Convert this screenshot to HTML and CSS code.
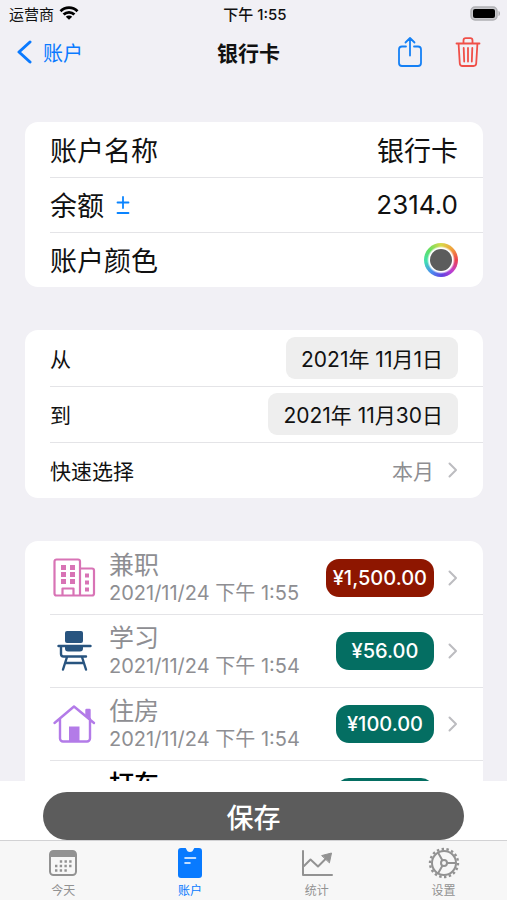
FILE: index.html
```html
<!DOCTYPE html>
<html lang="zh-CN">
<head>
<meta charset="utf-8">
<meta name="viewport" content="width=device-width, initial-scale=1">
<title>银行卡</title>
<link rel="stylesheet" href="styles.css">
</head>
<body>
<svg class="defs" aria-hidden="true">
  <symbol id="chevron" viewBox="0 0 10 16"><path d="M1.500 1.500 8 8l-6.500 6.500" fill="none" stroke="currentColor" stroke-width="2" stroke-linecap="round" stroke-linejoin="round"/></symbol>
</svg>

<div class="status">
  <div class="carrier">
    <span>运营商</span>
    <svg width="20" height="14" viewBox="0 0 20 14" aria-hidden="true">
      <g fill="none" stroke="#000" stroke-width="2.800"><path d="M1.500 5.200a12 12 0 0 1 17 0"/><path d="M4.600 8.600a7.600 7.600 0 0 1 10.800 0"/></g>
      <path d="M10 13.800 6.800 10.800a4.500 4.500 0 0 1 6.400 0z"/>
    </svg>
  </div>
  <time class="clock">下午 1:55</time>
  <svg class="battery" width="31" height="15" viewBox="0 0 31 15" aria-hidden="true">
    <rect x="1" y="1" width="26" height="13" rx="4" fill="#c8c8cc" stroke="#b0b0b4" stroke-width="1.500"/>
    <rect x="3" y="3" width="22" height="9" rx="2"/>
    <path d="M28.500 5c2 .6 2 4.400 0 5z" fill="#aaaaae"/>
  </svg>
</div>

<header class="nav">
  <a class="back" href="#accounts">
    <svg width="16" height="24" viewBox="0 0 16 24" aria-hidden="true"><path d="M14 2 3 12l11 10" fill="none" stroke="currentColor" stroke-width="3" stroke-linecap="round" stroke-linejoin="round"/></svg>
    <span>账户</span>
  </a>
  <h1>银行卡</h1>
  <div class="actions">
    <button class="share" type="button" aria-label="分享">
      <svg width="26" height="32" viewBox="0 0 26 32" fill="none" stroke="currentColor" stroke-width="1.800" stroke-linecap="round" stroke-linejoin="round"><path d="M9 10.500H5a3 3 0 0 0-3 3V27a3 3 0 0 0 3 3h16a3 3 0 0 0 3-3V13.500a3 3 0 0 0-3-3h-4M13 19.500V2M8.500 6.500 13 2l4.500 4.500"/></svg>
    </button>
    <button class="trash" type="button" aria-label="删除">
      <svg width="26" height="32" viewBox="0 0 26 32" fill="none" stroke="currentColor" stroke-width="1.800" stroke-linecap="round" stroke-linejoin="round"><path d="M1.500 7.500h23M8.500 7V4.500A2.300 2.300 0 0 1 10.800 2.200h4.400a2.300 2.300 0 0 1 2.300 2.300V7M3.600 8l1.200 19.500a2.700 2.700 0 0 0 2.700 2.500h11a2.700 2.700 0 0 0 2.700-2.500L22.400 8M8.700 12l.5 13.500M13 12v13.500M17.300 12l-.5 13.500"/></svg>
    </button>
  </div>
</header>

<main class="content">
  <section class="card account">
    <div class="row"><label for="name">账户名称</label><input id="name" type="text" value="银行卡"></div>
    <div class="row">
      <label for="balance">余额</label>
      <button class="sign" type="button" aria-label="切换正负">
        <svg width="14" height="20" viewBox="0 0 14 20" stroke="currentColor" stroke-width="1.800" stroke-linecap="round"><path d="M7 2v11M1.500 7.500h11M1.500 18h11"/></svg>
      </button>
      <input id="balance" type="text" inputmode="decimal" value="2314.0">
    </div>
    <div class="row"><label for="color">账户颜色</label><span class="ring"><input id="color" type="color" value="#5c5c5c"></span></div>
  </section>

  <section class="card period">
    <div class="row"><label for="from">从</label><button id="from" class="date" type="button">2021年 11月1日</button></div>
    <div class="row"><label for="to">到</label><button id="to" class="date" type="button">2021年 11月30日</button></div>
    <div class="row"><label for="quick">快速选择</label><button id="quick" class="quick" type="button">本月<svg class="chevron" aria-hidden="true"><use href="#chevron"/></svg></button></div>
  </section>

  <section class="card records">
    <a class="row" href="#r1">
      <svg class="icon" viewBox="0 0 44 44" fill="none" stroke="#d873b5" stroke-width="2.200" stroke-linejoin="round" aria-hidden="true">
        <path d="M28 39.500H4.500a2 2 0 0 1-2-2v-32a2 2 0 0 1 2-2H26a2 2 0 0 1 2 2zM28 12.500h12a2 2 0 0 1 2 2v23a2 2 0 0 1-2 2H28M10.500 39.500v-7h11v7"/>
        <path fill="#d873b5" stroke="none" d="M9 9h5v5H9zM18 9h5v5h-5zM9 16h5v5H9zM18 16h5v5h-5zM9 23h5v5H9zM18 23h5v5h-5zM33 17.500h4v4h-4zM33 24.500h4v4h-4zM33 31.500h4v4h-4z"/>
      </svg>
      <div class="text"><span class="title">兼职</span><time>2021/11/24 下午 1:55</time></div>
      <span class="amount income">¥1,500.00</span>
      <svg class="chevron" aria-hidden="true"><use href="#chevron"/></svg>
    </a>
    <a class="row" href="#r2">
      <svg class="icon" viewBox="0 0 44 44" fill="none" stroke="#28547f" stroke-width="2.400" stroke-linecap="round" stroke-linejoin="round" aria-hidden="true">
        <rect x="13" y="2" width="18" height="12" rx="2" fill="#28547f" stroke="none"/>
        <path d="M13 17.500h18v2a3 3 0 0 1-3 3H16a3 3 0 0 1-3-3z" fill="#28547f" stroke="none"/>
        <path d="M6.500 17h32M9 17v8a2.500 2.500 0 0 0 2.500 2.500H34M15 28l-4 12.500M30 28l4 12.500M13.500 34h18"/>
      </svg>
      <div class="text"><span class="title">学习</span><time>2021/11/24 下午 1:54</time></div>
      <span class="amount expense">¥56.00</span>
      <svg class="chevron" aria-hidden="true"><use href="#chevron"/></svg>
    </a>
    <a class="row" href="#r3">
      <svg class="icon" viewBox="0 0 44 44" fill="none" stroke="#b37be8" stroke-width="2.400" stroke-linecap="round" stroke-linejoin="round" aria-hidden="true">
        <path d="M2.500 21 22 4.500 42 21M8 17v19.500a3 3 0 0 0 3 3h24a3 3 0 0 0 3-3V17"/>
        <path d="M34.500 8h3v9l-3-3z" fill="#b37be8"/>
        <path d="M17 24.500h10.500v15H17z" fill="#b37be8" stroke="none"/>
      </svg>
      <div class="text"><span class="title">住房</span><time>2021/11/24 下午 1:54</time></div>
      <span class="amount expense">¥100.00</span>
      <svg class="chevron" aria-hidden="true"><use href="#chevron"/></svg>
    </a>
    <a class="row current" href="#r4">
      <span class="icon"></span>
      <div class="text"><span class="title">打车</span></div>
      <span class="amount expense"></span>
      <span class="chevron"></span>
    </a>
  </section>
</main>

<div class="save-bar"><button class="save" type="button">保存</button></div>

<nav class="tabs">
  <a href="#today">
    <svg width="32" height="32" viewBox="0 0 30 32" aria-hidden="true">
      <rect x="2" y="4" width="26" height="24" rx="3.500" fill="none" stroke="currentColor" stroke-width="2"/>
      <path fill="currentColor" d="M2 10V7a3 3 0 0 1 3-3h20a3 3 0 0 1 3 3v3z"/>
      <path stroke="currentColor" stroke-width="2.400" stroke-dasharray="2.400 2.300" d="M11.800 14.500h12M7 19h17M7 23.500h12"/>
    </svg>
    <span>今天</span>
  </a>
  <a class="active" href="#accounts">
    <svg width="30" height="32" viewBox="0 0 30 32" aria-hidden="true">
      <path fill="currentColor" d="M6 1h4.500c1 0 .8 4 4.500 4s3.500-4 4.500-4H24a3 3 0 0 1 3 3v24a3 3 0 0 1-3 3H6a3 3 0 0 1-3-3V4a3 3 0 0 1 3-3z"/>
      <path stroke="#fff" stroke-width="1.600" stroke-linecap="round" d="M10 11h10.500M10 16h5"/>
    </svg>
    <span>账户</span>
  </a>
  <a href="#stats">
    <svg width="32" height="32" viewBox="0 0 32 32" fill="none" stroke="currentColor" stroke-width="2" stroke-linecap="round" stroke-linejoin="round" aria-hidden="true">
      <path d="M2 4v24h29M3 19l6.500-6.500 7.500 7 9-9"/>
      <path fill="currentColor" stroke-width="1" d="M21 8.500 30.500 6l-2 9.500z"/>
    </svg>
    <span>统计</span>
  </a>
  <a href="#settings">
    <svg width="32" height="32" viewBox="0 0 32 32" fill="none" stroke="currentColor" stroke-width="2" aria-hidden="true">
      <circle cx="16" cy="16" r="12"/>
      <circle cx="16" cy="16" r="14" stroke-width="2.400" pathLength="72" stroke-dasharray="2 2"/>
      <circle cx="16" cy="16" r="3"/>
      <path d="M19 16h9M14.500 13.400 10 5.600M14.500 18.600 10 26.400"/>
    </svg>
    <span>设置</span>
  </a>
</nav>
</body>
</html>
```
FILE: styles.css
```css
* {
  box-sizing: border-box;
}

body {
  margin: 0;
  height: 100vh;
  display: flex;
  flex-direction: column;
  background: #f1f0f5;
  color: #111;
  font-family: Inter, "Noto Sans CJK SC", sans-serif;
  font-size: 20px;
}

button,
input {
  margin: 0;
  padding: 0;
  border: 0;
  background: none;
  color: inherit;
  font: inherit;
}

a {
  color: inherit;
  text-decoration: none;
}

svg {
  display: block;
}

.defs {
  position: absolute;
  width: 0;
  height: 0;
}

.status,
.nav {
  display: grid;
  grid-template-columns: 1fr auto 1fr;
  align-items: center;
  flex: none;
}

.status {
  height: 26px;
  padding: 0 6px 0 9px;
  font-size: 15px;
}

.carrier {
  display: flex;
  align-items: center;
  gap: 5px;
}

.clock {
  font-size: 15px;
  font-weight: 500;
}

.battery {
  justify-self: end;
}

.nav {
  height: 52px;
  padding: 0 26px 0 16px;
}

.back {
  display: flex;
  align-items: center;
  gap: 11px;
  color: #0a7aff;
}

.nav h1 {
  margin: 0;
  font-size: 21px;
  font-weight: 700;
}

.actions {
  display: flex;
  justify-content: flex-end;
  gap: 32px;
}

.share {
  color: #1580f5;
}

.trash {
  color: #f04f48;
}

.content {
  flex: 1;
  min-height: 0;
  overflow: hidden;
  padding: 44px 24px 0 25px;
}

.card {
  margin-bottom: 43px;
  border-radius: 13px;
  background: #fff;
}

.row {
  display: flex;
  align-items: center;
  position: relative;
  padding: 0 25px;
}

.row + .row::before {
  content: "";
  position: absolute;
  top: 0;
  left: 25px;
  right: 0;
  height: 1px;
  background: #e4e4e7;
}

.account .row {
  height: 55px;
  font-size: 27px;
}

.account input[type="text"] {
  flex: 1;
  min-width: 0;
  text-align: right;
}

.account #balance {
  font-size: 26px;
}

.sign {
  margin-left: 12px;
  color: #0a84ff;
}

.ring {
  display: grid;
  place-items: center;
  width: 34px;
  height: 34px;
  margin-left: auto;
  border-radius: 50%;
  background:
    radial-gradient(circle, #fff 12px, transparent 14px),
    conic-gradient(#d8d94a, #f0a03c 45deg, #ee3f4d 90deg, #c03fd0 135deg, #6240e0 175deg, #4a8fee 220deg, #3fe0b0 265deg, #62df62 310deg, #d8d94a);
}

.ring input {
  width: 22px;
  height: 22px;
  border-radius: 50%;
  overflow: hidden;
  background: #5c5c5c;
  appearance: none;
}

.ring input::-webkit-color-swatch-wrapper {
  padding: 0;
}

.ring input::-webkit-color-swatch {
  border: 0;
}

.period .row {
  height: 56px;
  justify-content: space-between;
}

.period label {
  font-size: 21px;
}

.date {
  height: 42px;
  padding: 0 15px;
  border-radius: 9px;
  background: #eee;
  font-size: 21px;
}

.quick {
  display: flex;
  align-items: center;
  gap: 14px;
  color: #8e8e92;
  font-size: 21px;
}

.chevron {
  flex: none;
  width: 10px;
  height: 16px;
  color: #bcbcc0;
}

.records .row {
  height: 73px;
}

.icon {
  flex: none;
  width: 44px;
  height: 44px;
  margin: 0 13px 0 2px;
}

.text {
  flex: 1;
  min-width: 0;
  height: 56px;
  display: flex;
  flex-direction: column;
  color: #8e8e92;
  white-space: nowrap;
}

.title {
  font-size: 25px;
  line-height: 30px;
}

.text time {
  line-height: 26px;
}

.current .title {
  color: #000;
  font-weight: 500;
}

.amount {
  display: grid;
  place-items: center;
  min-width: 98px;
  height: 38px;
  margin-right: 14px;
  padding: 0 7px;
  border-radius: 13px;
  color: #fff;
  font-weight: 500;
}

.income {
  background: #8e1600;
}

.expense {
  background: #046e62;
}

.save-bar {
  flex: none;
  padding: 11px 43px 0;
  background: #fff;
}

.save {
  display: block;
  width: 100%;
  height: 48px;
  border-radius: 24px;
  background: #5c5c5c;
  color: #fff;
  font-size: 27px;
  font-weight: 500;
}

.tabs {
  flex: none;
  display: grid;
  grid-template-columns: repeat(4, 1fr);
  height: 60px;
  padding-top: 6px;
  border-top: 1px solid #d2d2d4;
  background: #f7f7f7;
  color: #929292;
  font-size: 12px;
}

.tabs a {
  display: flex;
  flex-direction: column;
  align-items: center;
  gap: 2px;
}

.tabs .active {
  color: #087aff;
}
```
